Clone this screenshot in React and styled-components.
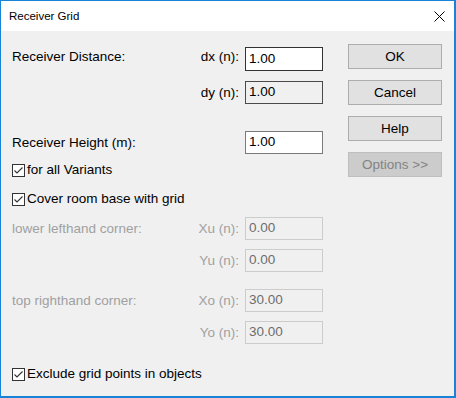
import React from "react";
import styled, { createGlobalStyle } from "styled-components";

const Global = createGlobalStyle`
  html, body { margin: 0; padding: 0; background: #ffffff; }
  * { box-sizing: border-box; }
`;

const Window = styled.div`
  width: 456px;
  height: 398px;
  border-style: solid;
  border-color: #1883d7;
  border-width: 1px 2px 2px 1px;
  background: #f0f0f0;
  display: flex;
  flex-direction: column;
  font-family: "Liberation Sans", Arial, sans-serif;
  font-size: 13.5px;
  color: #000;
`;

const TitleBar = styled.div`
  height: 30px;
  background: #ffffff;
  display: flex;
  align-items: center;
  justify-content: space-between;
  padding: 0 9px 0 8px;
  flex-shrink: 0;
`;

const Title = styled.span`
  font-size: 11.5px;
  line-height: 16px;
  color: #000;
`;

const CloseBox = styled.div`
  width: 12px;
  height: 12px;
  display: flex;
  align-items: center;
  justify-content: center;
`;

const Body = styled.div`
  display: flex;
  padding: 13px 12px 0 11px;
  flex: 1;
`;

const Main = styled.div`
  width: 311px;
  margin-top: 3px;
  display: flex;
  flex-direction: column;
`;

const Row = styled.div`
  display: flex;
  align-items: ${(p) => (p.$top ? "flex-start" : "center")};
  height: ${(p) => p.$h || 23}px;
  margin-top: ${(p) => p.$gap || 0}px;
`;

const Label = styled.span`
  flex: 1;
  line-height: 16px;
  white-space: nowrap;
  color: ${(p) => (p.$disabled ? "#a0a0a0" : "#000")};
  padding-top: ${(p) => (p.$top ? 2 : 0)}px;
`;

const SubLabel = styled.span`
  line-height: 16px;
  margin-right: 6px;
  white-space: nowrap;
  color: ${(p) => (p.$disabled ? "#a0a0a0" : "#000")};
  padding-top: ${(p) => (p.$top ? 2 : 0)}px;
`;

const Field = styled.div`
  width: 78px;
  height: 100%;
  display: flex;
  align-items: center;
  padding: 0 0 1px 3px;
  border: 1px solid ${(p) => p.$border};
  background: ${(p) => p.$bg};
  color: ${(p) => p.$color || "#000"};
  line-height: 16px;
`;

const CheckRow = styled.label`
  display: flex;
  align-items: center;
  height: 16px;
  margin-top: ${(p) => p.$gap || 0}px;
  gap: 2px;
  line-height: 16px;
  white-space: nowrap;
`;

const Box = styled.span`
  width: 13px;
  height: 13px;
  border: 1px solid #333333;
  background: #ffffff;
  display: flex;
  align-items: center;
  justify-content: center;
  flex-shrink: 0;
`;

const Buttons = styled.div`
  margin-left: 25px;
  width: 94px;
  display: flex;
  flex-direction: column;
  gap: 11px;
`;

const Button = styled.div`
  height: 25px;
  display: flex;
  align-items: center;
  justify-content: center;
  background: ${(p) => (p.$disabled ? "#cccccc" : "#e1e1e1")};
  border: 1px solid ${(p) => (p.$disabled ? "#bfbfbf" : "#adadad")};
  color: ${(p) => (p.$disabled ? "#838383" : "#000")};
  line-height: 16px;
`;

function Check({ children, gap }) {
  return (
    <CheckRow $gap={gap}>
      <Box>
        <svg width="11" height="11" viewBox="0 0 11 11">
          <polyline points="1.5,5.5 4,8 9.5,2.5" fill="none" stroke="#333" strokeWidth="1.1" />
        </svg>
      </Box>
      <span>{children}</span>
    </CheckRow>
  );
}

const active = { $border: "#333333", $bg: "#ffffff" };
const readonly = { $border: "#4a4a4a", $bg: "#f0f0f0" };
const normal = { $border: "#7a7a7a", $bg: "#ffffff" };
const disabled = { $border: "#cccccc", $bg: "#f0f0f0", $color: "#6d6d6d" };

export default function App() {
  return (
    <>
      <Global />
      <Window>
        <TitleBar>
          <Title>Receiver Grid</Title>
          <CloseBox>
            <svg width="11" height="11" viewBox="0 0 11 11">
              <path d="M0.5 0.5 L10.5 10.5 M10.5 0.5 L0.5 10.5" stroke="#000" strokeWidth="1" />
            </svg>
          </CloseBox>
        </TitleBar>
        <Body>
          <Main>
            <Row $h={24} $top>
              <Label $top>Receiver Distance:</Label>
              <SubLabel $top>dx (n):</SubLabel>
              <Field {...active}>1.00</Field>
            </Row>
            <Row $gap={10}>
              <Label />
              <SubLabel>dy (n):</SubLabel>
              <Field {...readonly}>1.00</Field>
            </Row>
            <Row $gap={27}>
              <Label>Receiver Height (m):</Label>
              <Field {...normal}>1.00</Field>
            </Row>
            <Check gap={8}>for all Variants</Check>
            <Check gap={13}>Cover room base with grid</Check>
            <Row $gap={10}>
              <Label $disabled>lower lefthand corner:</Label>
              <SubLabel $disabled>Xu (n):</SubLabel>
              <Field {...disabled}>0.00</Field>
            </Row>
            <Row $gap={9}>
              <Label />
              <SubLabel $disabled>Yu (n):</SubLabel>
              <Field {...disabled}>0.00</Field>
            </Row>
            <Row $gap={17}>
              <Label $disabled>top righthand corner:</Label>
              <SubLabel $disabled>Xo (n):</SubLabel>
              <Field {...disabled}>30.00</Field>
            </Row>
            <Row $gap={9}>
              <Label />
              <SubLabel $disabled>Yo (n):</SubLabel>
              <Field {...disabled}>30.00</Field>
            </Row>
            <Check gap={22}>Exclude grid points in objects</Check>
          </Main>
          <Buttons>
            <Button>OK</Button>
            <Button>Cancel</Button>
            <Button>Help</Button>
            <Button $disabled>Options &gt;&gt;</Button>
          </Buttons>
        </Body>
      </Window>
    </>
  );
}
